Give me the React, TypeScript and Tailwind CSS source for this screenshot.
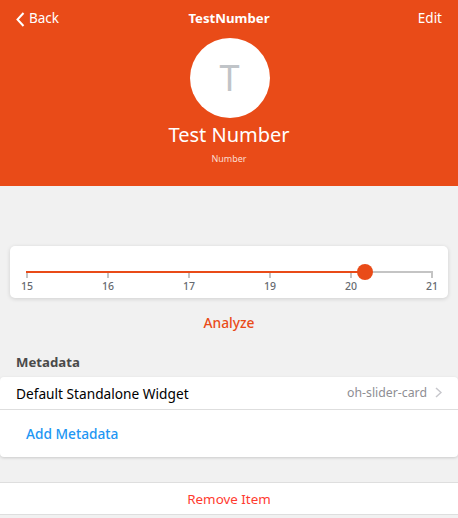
import React from "react";

const ticks = ["15", "16", "17", "19", "20", "21"];

export default function App() {
  return (
    <div className="flex h-[518px] w-[458px] flex-col overflow-hidden bg-[#f1f1f1] font-['Noto_Sans',sans-serif] text-[14px]">
      <header className="flex h-[186px] shrink-0 flex-col items-center bg-[#e94b18] text-white">
        <div className="grid h-[38px] w-full grid-cols-3 items-center px-4">
          <div className="flex items-center gap-[4px]">
            <svg width="9" height="15" viewBox="0 0 9 15" fill="none" stroke="white" strokeWidth="2">
              <path d="M7.5 1 L1.5 7.5 L7.5 14" />
            </svg>
            <span className="text-[13.5px] leading-none">Back</span>
          </div>
          <span className="text-center text-[13.2px] font-bold leading-none">TestNumber</span>
          <span className="text-right text-[13.5px] leading-none">Edit</span>
        </div>
        <div className="ml-px flex h-[80px] w-[80px] items-center justify-center rounded-full bg-white text-[36px] leading-none text-[#c0c4c8]">
          T
        </div>
        <div className="mt-[2px] text-[20px] leading-[30px]">Test Number</div>
        <div className="mt-[3px] text-[9px] leading-3 text-[#fbdcd0]">Number</div>
      </header>

      <section className="mx-[10px] mt-[60px] h-[52px] shrink-0 rounded-[5px] bg-white pl-4 pr-[15px] pt-[25px] shadow-[0_1px_4px_rgba(0,0,0,0.14)]">
        <div className="relative h-[2px] bg-[#c4c4c4]">
          <div className="h-full w-[339px] bg-[#e94b18]" />
          <div className="absolute left-[331px] top-[-7px] h-4 w-4 rounded-full bg-[#e94b18]" />
        </div>
        <div className="flex justify-between">
          {ticks.map((t) => (
            <div key={t} className="flex w-[2px] flex-col items-center">
              <div className="h-[5px] w-[2px] bg-[#c4c4c4]" />
              <span className="mt-[1px] text-[10.5px] font-medium leading-[14px] text-[#666a70]">{t}</span>
            </div>
          ))}
        </div>
      </section>

      <div className="mt-[15px] text-center text-[13.8px] font-medium leading-5 text-[#e94b18]">Analyze</div>

      <div className="mt-[19px] pl-4 text-[13.2px] font-bold leading-5 text-[#4a4a4a]">Metadata</div>

      <section className="mt-[5px] h-[80px] shrink-0 rounded-[4px] bg-white shadow-[0_1px_3px_rgba(0,0,0,0.16)]">
        <div className="flex h-[33px] items-center justify-between border-b border-[#dedede] pl-4 pr-4">
          <span className="pt-px text-[13.7px] leading-none text-black">Default Standalone Widget</span>
          <div className="flex items-center gap-2">
            <span className="text-[12.3px] leading-none text-[#8e8e93]">oh-slider-card</span>
            <svg width="7" height="11" viewBox="0 0 7 11" fill="none" stroke="#c7c7cc" strokeWidth="1.5">
              <path d="M1 1 L6 5.5 L1 10" />
            </svg>
          </div>
        </div>
        <div className="flex h-[47px] items-center pl-[26px] pt-px text-[13.7px] font-medium text-[#2196f3]">Add Metadata</div>
      </section>

      <div className="mt-[25px] flex h-[33px] shrink-0 items-center justify-center border-y border-[#dedede] bg-white pt-px text-[13.4px] text-[#ff3b30]">
        Remove Item
      </div>
    </div>
  );
}
